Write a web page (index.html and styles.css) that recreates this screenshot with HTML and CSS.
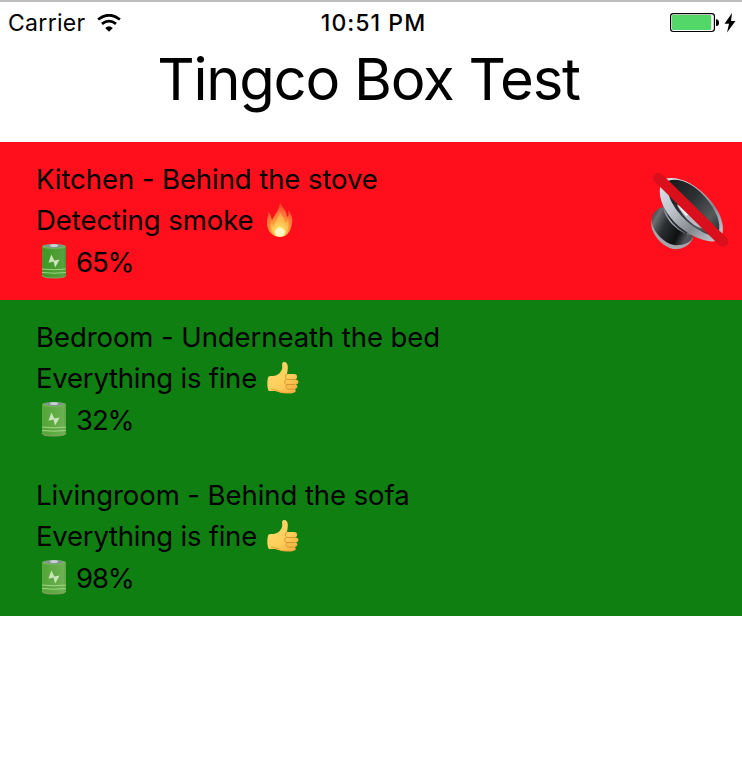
FILE: index.html
```html
<!DOCTYPE html>
<html lang="en">
<head>
<meta charset="utf-8">
<title>Tingco Box Test</title>
<link rel="stylesheet" href="styles.css">
</head>
<body>
<svg class="defs" aria-hidden="true">
  <defs>
    <linearGradient id="cell"><stop offset="0" stop-color="#438e26"/><stop offset=".2" stop-color="#3c9622"/><stop offset=".7" stop-color="#56a23d"/><stop offset=".9" stop-color="#62a950"/><stop offset="1" stop-color="#438e29"/></linearGradient>
    <linearGradient id="thumb-fill" x1="0" y1="0" x2="1" y2="1"><stop offset="0" stop-color="#ffdc72"/><stop offset=".6" stop-color="#ffcd59"/><stop offset="1" stop-color="#eda83a"/></linearGradient>
    <radialGradient id="flame-fill" cx=".5" cy=".88" r=".85"><stop offset="0" stop-color="#fffff0"/><stop offset=".18" stop-color="#fff66c"/><stop offset=".42" stop-color="#ffb83d"/><stop offset=".7" stop-color="#ff7c3c"/><stop offset="1" stop-color="#fb4a2c"/></radialGradient>
    <linearGradient id="rim" x1="0" y1="0" x2="1" y2="1"><stop offset="0" stop-color="#e1e5ed"/><stop offset=".35" stop-color="#c0c4cc"/><stop offset=".65" stop-color="#85888e"/><stop offset="1" stop-color="#d3d7df"/></linearGradient>
    <linearGradient id="cone" x1="0" y1="0" x2="1" y2="1"><stop offset="0" stop-color="#17191b"/><stop offset=".4" stop-color="#2c3033"/><stop offset=".75" stop-color="#54585b"/><stop offset="1" stop-color="#25282b"/></linearGradient>
    <linearGradient id="magnet" x1="0" y1="0" x2="1" y2=".5"><stop offset="0" stop-color="#202326"/><stop offset=".22" stop-color="#6b6e71"/><stop offset=".45" stop-color="#2c2f32"/><stop offset=".8" stop-color="#0d0f11"/><stop offset="1" stop-color="#505255"/></linearGradient>
    <linearGradient id="neck" x1="0" y1="0" x2="1" y2="1"><stop offset="0" stop-color="#55585c"/><stop offset=".45" stop-color="#b9bcc1"/><stop offset="1" stop-color="#4b4e52"/></linearGradient>
    <symbol id="battery" viewBox="0 0 28 36">
      <path d="M2 4v28q0 3 12 3t12-3V4z" fill="currentColor"/>
      <path d="M2 4v28q0 3 12 3t12-3V4z" fill="url(#cell)" opacity=".5"/>
      <ellipse cx="14" cy="3.400" rx="12" ry="2.500" fill="#75b35b"/>
      <ellipse cx="14" cy="3" rx="9.500" ry="1.800" fill="#83948e"/>
      <ellipse cx="14" cy="2.400" rx="4" ry="1.500" fill="#c6d0da"/>
      <path d="M11.300 11.500l-2.800 8.300 5-1.200 1.600 6 4.500-8-5.200 1z" fill="#cae4bb"/>
      <path d="M2 26q12 1.500 24 0M2 29.500q12 1.500 24 0" fill="none" stroke="#a2d486" stroke-width="1"/>
      <path d="M2 32q0 3 12 3t12-3" fill="none" stroke="#8b9e66" stroke-width="1"/>
    </symbol>
    <symbol id="thumb" viewBox="0 0 34 34">
      <path d="M2 17c0-2 2-2 5-2 5 0 8-4 9-7 1-2-1.200-7 2-7 5 0 4 7 3 12h7c4 0 4 5 1 5.500 5 0 4 5 .6 5 3 1 2 4.300-1 4.500 2 1 1.400 4-2 4H20c-7 0-9-2-12-2H3c-2-2-2-10-1-13z" fill="url(#thumb-fill)"/>
      <path d="M21 13c-2 1-2 5 0 5.500h8M29 18.500h-8c-3 0-3 5 0 5h8M29 23.600h-7c-3 0-2 4.500 0 4.500h6" fill="none" stroke="#d79936" stroke-width="1"/>
      <path d="M5 28l5 1c3 2 6 3 10 3h6" fill="none" stroke="#eba637" stroke-width="1.200"/>
    </symbol>
  </defs>
</svg>

<header class="status">
  <div class="network">
    <span class="carrier">Carrier</span>
    <svg class="wifi" viewBox="0 0 24 18"><path d="M1.100 5.500Q12-3.100 22.900 5.500" fill="none" stroke="#000" stroke-width="2.800"/><path d="M5 9.800Q12 4.500 19 9.800" fill="none" stroke="#000" stroke-width="2.800"/><path d="M8.200 14Q12 10.500 15.800 14L12 17.700z"/></svg>
  </div>
  <time class="clock">10:51 PM</time>
  <div class="power">
    <svg class="charge" viewBox="0 0 50 20"><rect x=".6" y=".6" width="43.800" height="17.900" rx="2.700" fill="#fff" stroke="#000" stroke-width="1.200"/><rect x="2" y="2" width="39.200" height="15" rx="1" fill="#53d769"/><path d="M46 6.200q3 0 3 3.500T46 13z"/></svg>
    <svg class="bolt" viewBox="0 0 12 20"><path d="M8 0L.5 10.700H5L3 19.500 11.500 8H7z"/></svg>
  </div>
</header>

<h1 class="title">Tingco Box Test</h1>

<main class="rooms">
  <section class="room alarm">
    <div class="details">
      <p class="place">Kitchen - Behind the stove</p>
      <p class="state">Detecting smoke<svg class="flame" viewBox="0 0 28 36"><path d="M14 0c1 5 7 8 7 15 2-1 2-4 1-7 4 5 5 9 4 13-1 8-5 14-12 14S0 29 1 19c0-4 2-5 1-9 3 2 3 5 4 8 3-6 8-11 8-18z" fill="url(#flame-fill)" opacity=".85"/><path d="M14 8c0 6 5 7 5 13 2 0 2-2 3-4 2 10-2 17-8 17S4 29 5 21c2 1 2 3 3 4 1-7 6-10 6-17z" fill="#ffe36b" opacity=".42"/><ellipse cx="14" cy="30" rx="5" ry="4.500" fill="#fffde0" opacity=".75"/></svg></p>
      <p class="level"><svg class="battery full"><use href="#battery"/></svg>65%</p>
    </div>
    <svg class="speaker" viewBox="0 0 78 80">
      <path d="M10 37C3 40 0 47 2 56c3 9 12 18 21 20 8 1 17-3 20-11L27 42z" fill="#a4a6a8"/>
      <path d="M10 35C4 38 1 43 2 50c2 10 12 20 22 22 8 1 17-2 19-8L22 32z" fill="url(#magnet)"/>
      <path d="M13 28c-3 11 10 29 26 34l10-1-25-33z" fill="url(#neck)"/>
      <path d="M16 36c3 10 10 18 21 24" fill="none" stroke="#2d3034" stroke-width="2"/>
      <path d="M14 6C26 2 45 9 60 27c13 15 16 31 10 39-8 7-30-2-43-15C11 37 5 16 14 6z" fill="url(#rim)"/>
      <path d="M19 7.500c11-3 27 4 39 20 11 14 14 28 9 34-5 4-20-4-31-14C24 36 14 20 19 7.500z" fill="url(#cone)"/>
      <path d="M27 32c7-3 23 10 29 22-5 5-21-6-29-22z" fill="#b9bcc3"/>
      <path d="M28 33c5 0 9 4 12 8l-4 2z" fill="#eff1f4"/>
      <path d="M8.500 5L73 68.500" stroke="#d90f1c" stroke-width="10.500" stroke-linecap="round"/>
    </svg>
  </section>
  <section class="room fine">
    <div class="details">
      <p class="place">Bedroom - Underneath the bed</p>
      <p class="state ok">Everything is fine<svg class="thumb"><use href="#thumb"/></svg></p>
      <p class="level"><svg class="battery pale"><use href="#battery"/></svg>32%</p>
    </div>
  </section>
  <section class="room fine">
    <div class="details">
      <p class="place">Livingroom - Behind the sofa</p>
      <p class="state ok">Everything is fine<svg class="thumb"><use href="#thumb"/></svg></p>
      <p class="level"><svg class="battery pale"><use href="#battery"/></svg>98%</p>
    </div>
  </section>
</main>
</body>
</html>
```
FILE: styles.css
```css
* { box-sizing: border-box; }
body {
  margin: 0;
  min-height: 784px;
  background: #fff;
  color: #000;
  font-family: Inter, sans-serif;
  border-top: 2px solid #bdbdbd;
}
p, h1 { margin: 0; }
svg { display: block; flex: none; }
.defs { position: absolute; width: 0; height: 0; }
.status {
  display: grid;
  grid-template-columns: 1fr auto 1fr;
  align-items: center;
  height: 42px;
  padding: 0 6px 0 8px;
  font-size: 23px;
}
.network, .power { display: flex; align-items: center; }
.power { justify-content: flex-end; gap: 4px; }
.network { gap: 11px; padding-bottom: 1px; }
.carrier { letter-spacing: .3px; }
.clock { font-weight: 550; font-size: 23px; letter-spacing: 1.05px; padding: 0 0 1px 3px; }
.wifi { width: 24px; height: 18px; }
.charge { width: 50px; height: 20px; }
.bolt { width: 12px; height: 20px; }
.title {
  height: 98px;
  padding-right: 5px;
  text-align: center;
  font-size: 58px;
  font-weight: 400;
  line-height: 70px;
  letter-spacing: -1.25px;
}
.room { display: flex; justify-content: space-between; height: 158px; padding: 17px 14px 0 36px; }
.alarm { background: #ff0f1b; }
.fine { background: #107f12; }
.details { font-size: 27.5px; line-height: 41px; }
.details p { display: flex; align-items: center; height: 41.3px; white-space: nowrap; }
.place { letter-spacing: -.07px; }
.state { letter-spacing: -.06px; }
.ok { letter-spacing: -.22px; }
.level { letter-spacing: -1.1px; }
.flame { width: 28px; height: 36px; margin: 0 0 2px 12px; }
.thumb { width: 34px; height: 34px; margin: 0 0 2px 9px; }
.battery { width: 28px; height: 36px; margin: 0 8.500px 2px 3.500px; }
.full { color: #4b9c30; }
.pale { color: #75b958; }
.speaker { width: 78px; height: 80px; margin-top: 14px; }
```
